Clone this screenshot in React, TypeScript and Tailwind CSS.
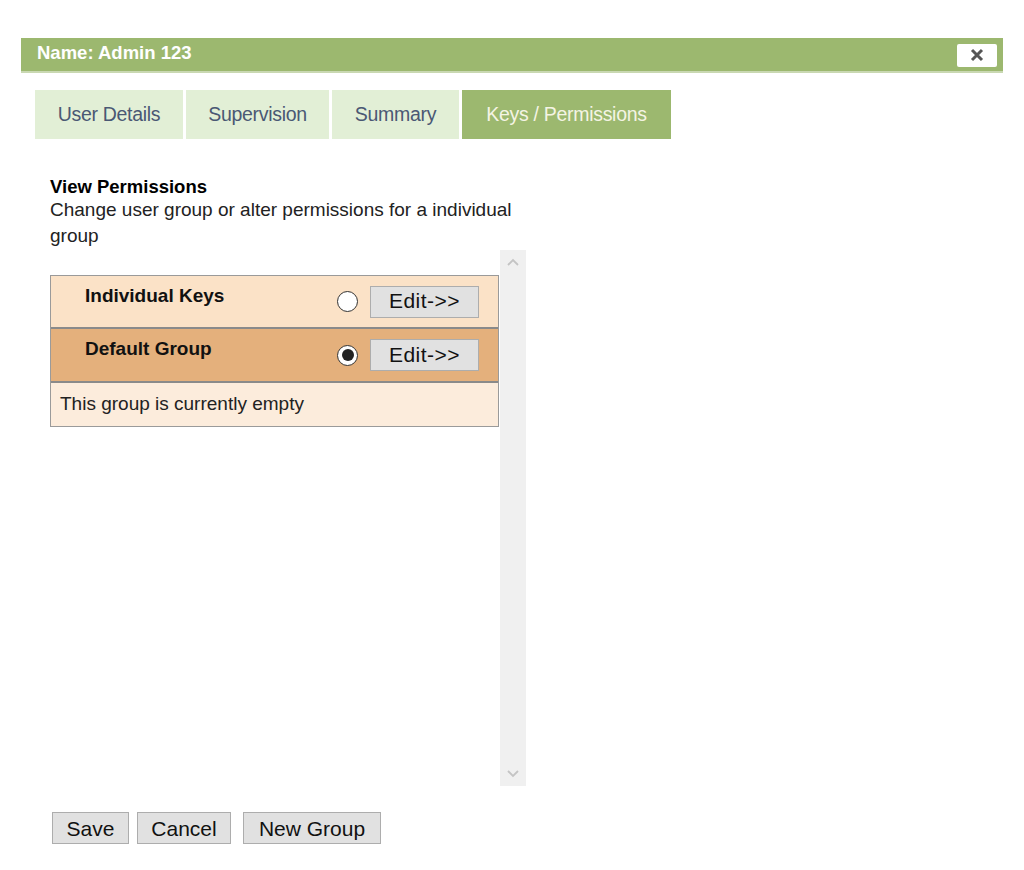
const tabs = [
  { label: "User Details", width: "w-[148px]" },
  { label: "Supervision", width: "w-[143px]" },
  { label: "Summary", width: "w-[127px]" },
  { label: "Keys / Permissions", width: "w-[209px]" },
]

function Radio({ checked }: { checked: boolean }) {
  return (
    <span className="w-[21px] h-[21px] rounded-full border border-[#333] bg-white flex items-center justify-center">
      {checked && <span className="w-[12px] h-[12px] rounded-full bg-[#222]"></span>}
    </span>
  )
}

function EditButton() {
  return (
    <button className="w-[109px] h-[32px] bg-[#e1e1e1] border border-[#adadad] text-[21px] text-[#111] leading-none pb-[2px] tracking-[0.5px]">
      Edit-&gt;&gt;
    </button>
  )
}

export default function App() {
  return (
    <div className="w-[1024px] h-[870px] bg-white pt-[38px] px-[21px] font-['Liberation_Sans',Arial,sans-serif]">
      <div className="h-[35px] bg-[#9cb86f] border-b-2 border-[#c9d8b2] flex items-center justify-between pl-[16px] pr-[6px]">
        <span className="text-white font-bold text-[18.5px] -mt-[3px]">Name: Admin 123</span>
        <button className="w-[40px] h-[23px] bg-white rounded-[2px] flex items-center justify-center mt-[1px]">
          <svg width="14" height="14" viewBox="0 0 14 14">
            <path d="M2 2 L12 12 M12 2 L2 12" stroke="#555" strokeWidth="3" />
          </svg>
        </button>
      </div>

      <div className="flex gap-[3px] pl-[14px] mt-[17px]">
        {tabs.map((t, i) => {
          const active = i === tabs.length - 1
          return (
            <div
              key={t.label}
              className={
                (active
                  ? "bg-[#9cb86f] text-[#f4f4e4] "
                  : "bg-[#e2efd6] text-[#4a5874] ") +
                t.width +
                " h-[49px] flex items-center justify-center text-[19.5px] tracking-[-0.3px]"
              }
            >
              {t.label}
            </div>
          )
        })}
      </div>

      <div className="pl-[29px] mt-[37px]">
        <div className="font-bold text-[18.5px] text-black leading-[22px]">View Permissions</div>
        <div className="text-[19px] text-[#222] leading-[26px] w-[480px] -mt-[1px]">
          Change user group or alter permissions for a individual group
        </div>

        <div className="flex mt-[1px] h-[536px] w-[476px]">
          <div className="w-[449px] pt-[25px]">
            <div className="border border-[#9a9a9a]">
              <div className="h-[53px] bg-[#fbe2c7] flex items-center pl-[34px] pr-[19px] border-b-2 border-[#8a8a8a]">
                <span className="font-bold text-[19px] text-[#111] flex-1 -mt-[11px]">Individual Keys</span>
                <Radio checked={false} />
                <span className="w-[12px]"></span>
                <EditButton />
              </div>
              <div className="h-[54px] bg-[#e4b07c] flex items-center pl-[34px] pr-[19px] border-b-2 border-[#8a8a8a]">
                <span className="font-bold text-[19px] text-[#111] flex-1 -mt-[11px]">Default Group</span>
                <Radio checked={true} />
                <span className="w-[12px]"></span>
                <EditButton />
              </div>
              <div className="h-[43px] bg-[#fcecdc] flex items-center pl-[9px]">
                <span className="text-[19px] text-[#222]">This group is currently empty</span>
              </div>
            </div>
          </div>
          <div className="w-[26px] ml-[1px] bg-[#f0f0f0] flex flex-col items-center justify-between py-[8px]">
            <svg width="12" height="8" viewBox="0 0 12 8">
              <path d="M1 7 L6 2 L11 7" stroke="#c4c4c4" strokeWidth="1.8" fill="none" />
            </svg>
            <svg width="12" height="8" viewBox="0 0 12 8">
              <path d="M1 1 L6 6 L11 1" stroke="#c4c4c4" strokeWidth="1.8" fill="none" />
            </svg>
          </div>
        </div>

        <div className="flex mt-[26px] ml-[2px] text-[21px] text-[#111]">
          <button className="w-[77px] h-[32px] bg-[#e1e1e1] border border-[#adadad] leading-none">Save</button>
          <button className="w-[94px] h-[32px] ml-[8px] bg-[#e1e1e1] border border-[#adadad] leading-none">Cancel</button>
          <button className="w-[138px] h-[32px] ml-[12px] bg-[#e1e1e1] border border-[#adadad] leading-none">New Group</button>
        </div>
      </div>
    </div>
  )
}
